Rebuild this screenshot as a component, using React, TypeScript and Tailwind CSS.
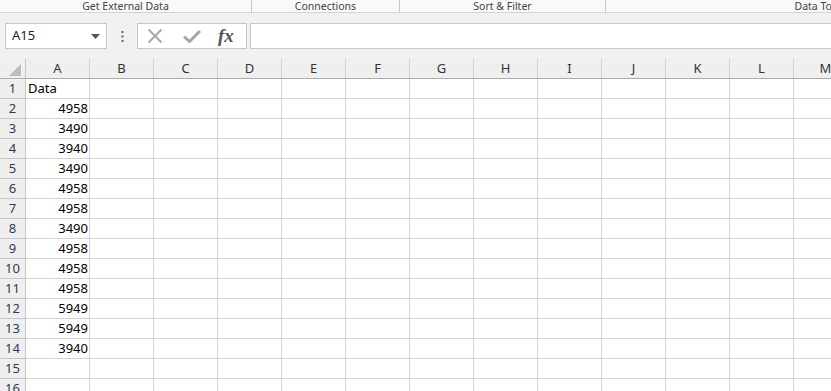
import React from 'react';

const columns = ['A', 'B', 'C', 'D', 'E', 'F', 'G', 'H', 'I', 'J', 'K', 'L', 'M'];

const values: (string | number)[] = ['Data', 4958, 3490, 3940, 3490, 4958, 4958, 3490, 4958, 4958, 4958, 5949, 5949, 3940, '', ''];

const groups = [
  { label: 'Get External Data', width: 'w-[252px]' },
  { label: 'Connections', width: 'w-[148px]' },
  { label: 'Sort & Filter', width: 'w-[206px]' },
];

const App: React.FC = () => {
  return (
    <div className="w-[831px] h-[391px] overflow-hidden bg-white flex flex-col font-['Noto_Sans',sans-serif] text-[#333]">
      {/* ribbon group labels */}
      <div className="h-[13px] shrink-0 flex bg-[#f9f9f9] border-b border-[#d4d4d4] text-[10.5px] leading-[12px] text-[#444]">
        {groups.map(g => (
          <div key={g.label} className={`${g.width} shrink-0 flex items-start justify-center border-r border-[#c8c8c8]`}>
            {g.label}
          </div>
        ))}
        <div className="flex-1 flex items-start justify-end whitespace-nowrap overflow-hidden">
          <span className="mr-[-15px]">Data Tools</span>
        </div>
      </div>

      {/* formula bar */}
      <div className="h-[46px] shrink-0 bg-[#f1f1f1] pt-[10px]">
        <div className="h-[26px] flex items-stretch">
          <div className="ml-[5px] w-[102px] bg-white border border-[#c6c6c6] flex items-center justify-between pl-[6px] pr-[6px]">
            <span className="text-[13px] text-[#222]">A15</span>
            <svg width="9" height="5" viewBox="0 0 9 5"><path d="M0 0h9L4.5 5z" fill="#555" /></svg>
          </div>
          <div className="w-[30px] flex items-center justify-center">
            <svg width="3" height="11" viewBox="0 0 3 11">
              <rect x="0.5" y="0" width="2" height="2" fill="#666" />
              <rect x="0.5" y="4.5" width="2" height="2" fill="#666" />
              <rect x="0.5" y="9" width="2" height="2" fill="#666" />
            </svg>
          </div>
          <div className="w-[110px] bg-white border border-[#c6c6c6] flex items-center">
            <svg className="ml-[9px]" width="16" height="16" viewBox="0 0 16 16">
              <path d="M1.5 1.5L14.5 14.5M14.5 1.5L1.5 14.5" stroke="#a6a6a6" strokeWidth="1.8" fill="none" />
            </svg>
            <svg className="ml-[20px]" width="18" height="14" viewBox="0 0 18 14">
              <path d="M1 7.5L6.5 12.5L17 2" stroke="#a6a6a6" strokeWidth="3" fill="none" />
            </svg>
            <span className="ml-[17px] font-['Liberation_Serif',serif] italic font-bold text-[19px] leading-none text-[#555] -mt-[2px]">fx</span>
          </div>
          <div className="ml-[3px] flex-1 bg-white border border-[#c6c6c6] border-r-0" />
        </div>
      </div>

      {/* sheet */}
      <div className="flex-1 overflow-hidden">
        <div className="flex h-[20px] bg-[#efefef] border-b border-[#ababab]">
          <div className="w-[26px] shrink-0 border-r border-[#c6c6c6] relative">
            <svg className="absolute right-[4px] bottom-[2px]" width="12" height="12" viewBox="0 0 12 12">
              <path d="M12 0V12H0z" fill="#bcbcbc" />
            </svg>
          </div>
          {columns.map(c => (
            <div key={c} className="w-[64px] shrink-0 border-r border-[#d0d0d0] flex items-center justify-center text-[13px] text-[#333]">
              {c}
            </div>
          ))}
        </div>
        {values.map((v, i) => (
          <div key={i} className="flex h-[20px]">
            <div className="w-[26px] shrink-0 bg-[#efefef] border-r border-b border-[#c6c6c6] flex items-center justify-center text-[13px] text-[#2e3b52]">
              {i + 1}
            </div>
            {columns.map((c, j) => (
              <div
                key={c}
                className={`w-[64px] shrink-0 border-r border-b border-[#d4d4d4] flex items-center pl-[2px] pr-[1px] text-[13px] text-black ${typeof v === 'number' ? 'justify-end' : 'justify-start'}`}
              >
                {j === 0 ? v : ''}
              </div>
            ))}
          </div>
        ))}
      </div>
    </div>
  );
};

export default App;
